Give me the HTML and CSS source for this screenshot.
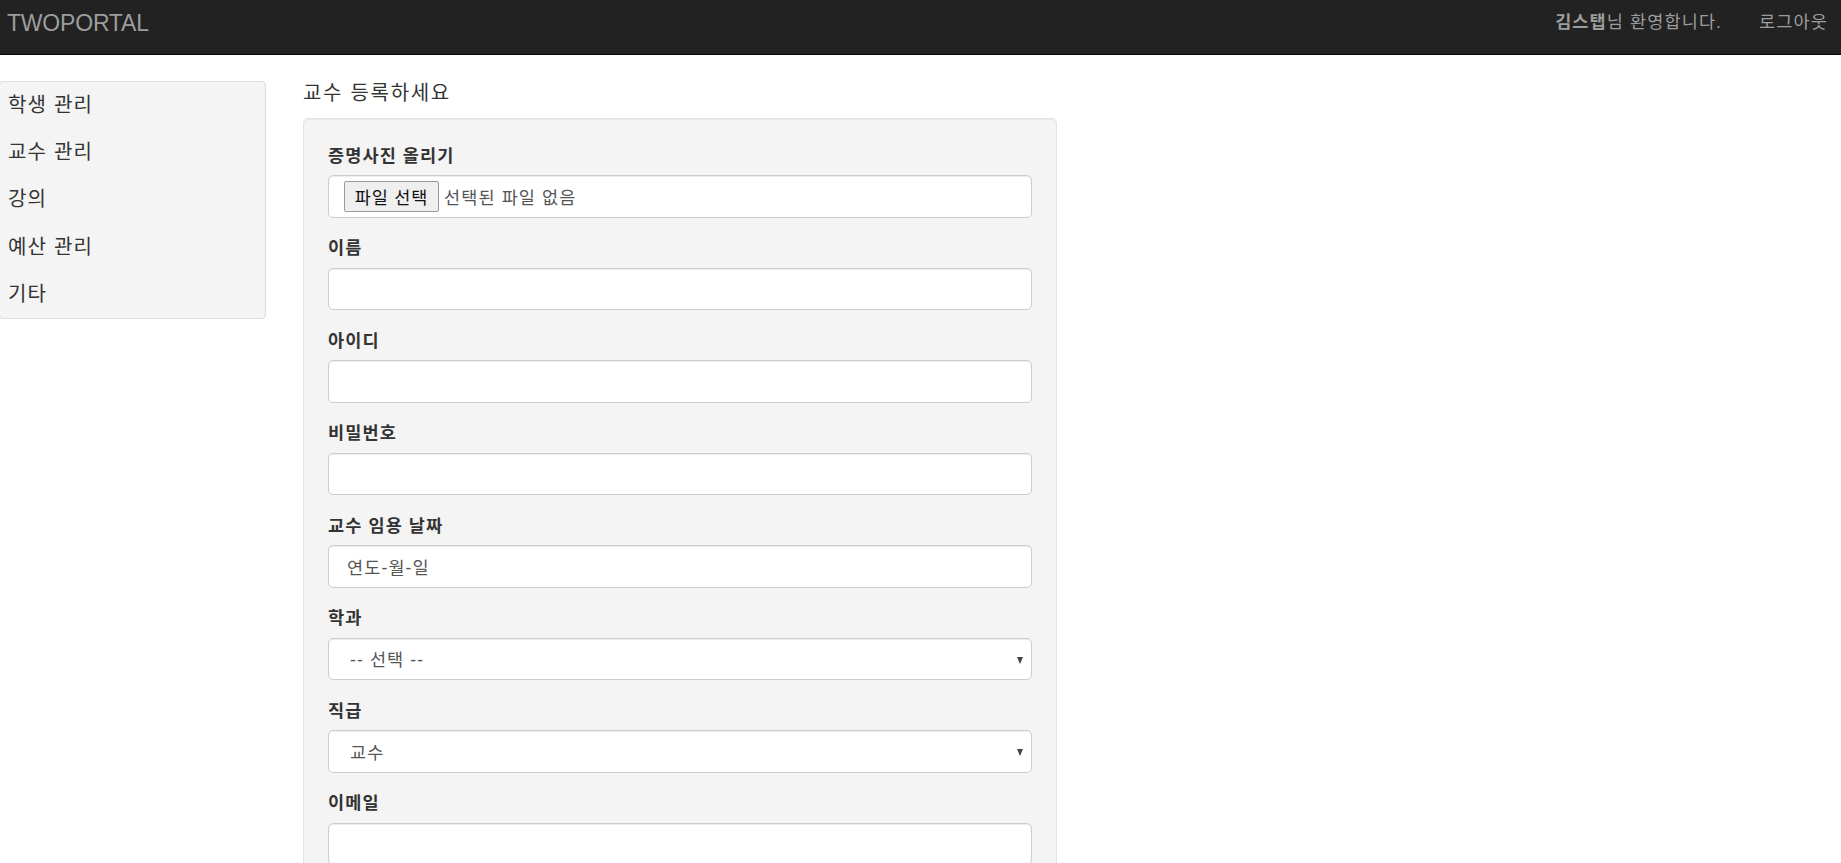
FILE: index.html
```html
<!DOCTYPE html>
<html lang="ko">
<head>
<meta charset="utf-8">
<title>TWOPORTAL</title>
<link rel="stylesheet" href="styles.css">
</head>
<body>
<header class="navbar">
  <a class="brand" href="#">TWOPORTAL</a>
  <nav class="nav-right">
    <span class="welcome"><b>김스탭</b>님 환영합니다.</span>
    <a class="logout" href="#">로그아웃</a>
  </nav>
</header>
<div class="layout">
  <aside class="sidebar">
    <a class="side-item" href="#">학생 관리</a>
    <a class="side-item" href="#">교수 관리</a>
    <a class="side-item" href="#">강의</a>
    <a class="side-item" href="#">예산 관리</a>
    <a class="side-item" href="#">기타</a>
  </aside>
  <main class="content">
    <p class="title">교수 등록하세요</p>
    <form class="well">
      <div class="form-group">
        <label class="label">증명사진 올리기</label>
        <div class="form-control file-control">
          <button type="button" class="file-btn">파일 선택</button>
          <span class="file-text">선택된 파일 없음</span>
        </div>
      </div>
      <div class="form-group">
        <label class="label">이름</label>
        <div class="form-control"></div>
      </div>
      <div class="form-group">
        <label class="label">아이디</label>
        <div class="form-control"></div>
      </div>
      <div class="form-group">
        <label class="label">비밀번호</label>
        <div class="form-control"></div>
      </div>
      <div class="form-group">
        <label class="label">교수 임용 날짜</label>
        <div class="form-control date-control"><span class="value">연도-월-일</span></div>
      </div>
      <div class="form-group">
        <label class="label">학과</label>
        <div class="form-control select-control"><span class="value">-- 선택 --</span><span class="caret"></span></div>
      </div>
      <div class="form-group">
        <label class="label">직급</label>
        <div class="form-control select-control"><span class="value">교수</span><span class="caret"></span></div>
      </div>
      <div class="form-group">
        <label class="label">이메일</label>
        <div class="form-control"></div>
      </div>
    </form>
  </main>
</div>
</body>
</html>
```
FILE: styles.css
```css
html, body {
  margin: 0;
  padding: 0;
  background: #fff;
}
body {
  font-family: "Liberation Sans", "Noto Sans CJK KR", sans-serif;
  color: #333;
  overflow: hidden;
  height: 863px;
  letter-spacing: 0.07em;
}
a { text-decoration: none; }

.navbar {
  height: 54px;
  background: #222;
  border-bottom: 1px solid #080808;
  display: flex;
  justify-content: space-between;
  align-items: flex-start;
}
.brand {
  font-size: 23px;
  line-height: 26px;
  padding: 10px 0 0 7px;
  color: #9d9d9d;
  letter-spacing: -0.2px;
}
.nav-right {
  display: flex;
  gap: 37px;
  padding: 10px 13px 0 0;
  font-size: 17.5px;
  line-height: 25px;
  color: #9d9d9d;
}
.welcome b { font-weight: bold; }
.logout { color: #9d9d9d; }

.layout {
  display: flex;
  align-items: flex-start;
  gap: 37px;
}
.sidebar {
  margin-top: 26px;
  margin-left: -1px;
  width: 265px;
  background: #f4f4f4;
  border: 1px solid #dddddd;
  border-radius: 4px;
  display: flex;
  flex-direction: column;
}
.side-item {
  height: 47.2px;
  line-height: 47px;
  padding-left: 8px;
  font-size: 20px;
  color: #333;
  letter-spacing: 0.06em;
}

.content {
  width: 754px;
}
.title {
  margin: 26px 0 12px;
  font-size: 20px;
  line-height: 25px;
  color: #333;
  letter-spacing: 0.085em;
}
.well {
  margin: 0;
  background: #f4f4f4;
  border: 1px solid #e3e3e3;
  border-radius: 5px;
  box-shadow: inset 0 1px 1px rgba(0,0,0,.05);
  padding: 24.75px 24px 24px;
}
.form-group {
  margin-bottom: 18.75px;
}
.label {
  display: block;
  font-size: 17.5px;
  line-height: 25px;
  font-weight: bold;
  color: #333;
  margin-bottom: 6.25px;
}
.form-control {
  box-sizing: border-box;
  height: 42.5px;
  background: #fff;
  border: 1px solid #cccccc;
  border-radius: 5px;
  box-shadow: inset 0 1px 1px rgba(0,0,0,.075);
  display: flex;
  align-items: center;
  font-size: 17.5px;
  color: #555;
  position: relative;
}
.file-control {
  padding-left: 15px;
}
.file-btn {
  box-sizing: border-box;
  height: 31px;
  width: 95px;
  padding: 0;
  font-family: inherit;
  font-size: 17.5px;
  font-weight: 400;
  letter-spacing: 0.05em;
  color: #111;
  background: #efefef;
  border: 1px solid #9a9a9a;
  border-radius: 2px;
}
.file-text {
  margin-left: 5px;
  color: #555;
}
.date-control { padding-left: 18px; }
.select-control { padding-left: 21px; }
.value { color: #555; }
.caret {
  position: absolute;
  right: 8px;
  top: 18px;
  width: 0;
  height: 0;
  border-left: 3.5px solid transparent;
  border-right: 3.5px solid transparent;
  border-top: 7px solid #444;
}
```
